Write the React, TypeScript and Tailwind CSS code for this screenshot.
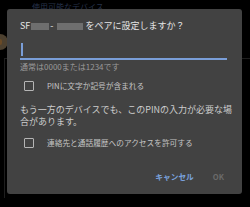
import React from "react"

const font = { fontFamily: '"Noto Sans CJK JP", "Noto Sans", sans-serif' }

function Checkbox() {
  return <span className="block h-[10px] w-[10px] shrink-0 rounded-[1px] border-[1.5px] border-[#b5b5b5]" />
}

function Blur({ w }: { w: string }) {
  return <span className={`inline-block h-[7px] align-middle bg-[#6e6e6e] ${w}`} />
}

export default function App() {
  return (
    <div className="relative h-[207px] w-[250px] overflow-hidden bg-black" style={font}>
      {/* dimmed page behind the dialog */}
      <div className="pl-[32px] pt-[1px] text-[8px] leading-[11px] text-[#26324a]">使用可能なデバイス</div>
      <div className="relative mt-[22px] h-[16px] w-[16px] -translate-x-[8px] rounded-full bg-[#4d4130]">
        <span className="absolute left-[6px] top-[5px] h-[6px] w-[4px] rounded-full bg-[#6a4a26]" />
      </div>
      <div className="ml-[4px] mt-[8px] h-[140px] border-l border-t border-[#1e1e1e]" />

      <div className="absolute left-[7px] top-[9px] flex h-[185px] w-[235px] flex-col rounded-[3px] bg-[#424242] pl-[13px] pr-[6px] pt-[11px]">
        <div className="flex items-center text-[9px] leading-[12px] text-[#e6e6e6]">
          <span>SF</span>
          <span className="ml-[1px]"><Blur w="w-[18px]" /></span>
          <span className="mx-[1px]">-</span>
          <span className="ml-[3px]"><Blur w="w-[26px]" /></span>
          <span className="ml-[2px]">をペアに設定しますか？</span>
        </div>

        <div className="mt-[7px] h-[21px] w-[207px] border-b-2 border-[#7a9ed8] pt-[4px]">
          <span className="ml-[1px] block h-[13px] w-[1.5px] bg-[#7a9ed8]" />
        </div>

        <div className="mt-[1px] text-[8px] leading-[12px] text-[#9a9a9a]">通常は0000または1234です</div>

        <div className="mt-[6px] flex h-[14px] items-center pl-[4px]">
          <Checkbox />
          <span className="ml-[13px] text-[7.7px] text-[#c4c4c4]">PINに文字か記号が含まれる</span>
        </div>

        <p className="mt-[11px] text-[9px] leading-[12px] text-[#cdcdcd]">
          もう一方のデバイスでも、このPINの入力が必要な場合があります。
        </p>

        <div className="mt-[8px] flex h-[14px] items-center pl-[4px]">
          <Checkbox />
          <span className="ml-[13px] text-[7.7px] text-[#c4c4c4]">連絡先と通話履歴へのアクセスを許可する</span>
        </div>

        <div className="mt-[20px] flex h-[14px] items-center justify-end pr-[12px] text-[7.7px] font-bold">
          <span className="text-[#7aa2de]">キャンセル</span>
          <span className="ml-[19px] text-[#6a6a6a]">OK</span>
        </div>
      </div>
    </div>
  )
}
